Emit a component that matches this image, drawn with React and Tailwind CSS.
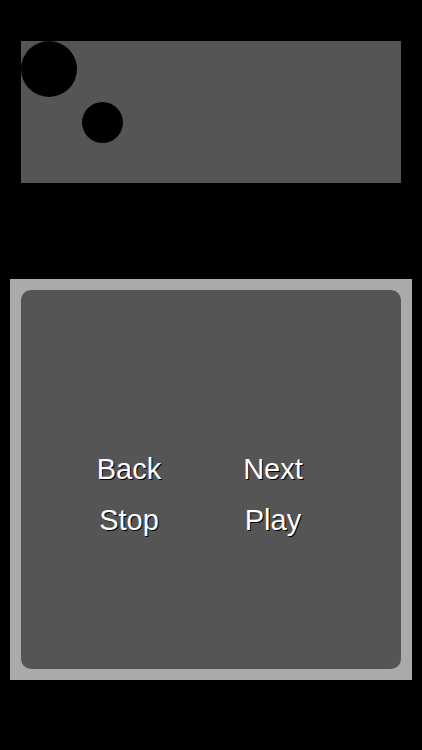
export default function App() {
  const txt = "text-center text-white text-[29px] leading-[51px] [text-shadow:1px_1px_0_#000]";
  return (
    <div className="w-[422px] h-[750px] bg-black overflow-hidden" style={{ fontFamily: '"Liberation Sans", Arial, sans-serif' }}>
      <div className="pt-[41px] px-[21px]">
        <div className="relative h-[142px] bg-[#555555] overflow-hidden">
          <div className="absolute left-0 top-0 w-[56px] h-[56px] rounded-full bg-black" />
          <div className="absolute left-[61px] top-[61px] w-[41px] h-[41px] rounded-full bg-black" />
        </div>
      </div>
      <div className="mt-[96px] mx-[10px] h-[401px] bg-[#aaaaaa] p-[11px]">
        <div className="h-full rounded-[10px] bg-[#555555] pt-[154px] pl-[36px]">
          <div className="grid grid-cols-[144px_144px]">
            <div className={txt}>Back</div>
            <div className={txt}>Next</div>
            <div className={txt}>Stop</div>
            <div className={txt}>Play</div>
          </div>
        </div>
      </div>
    </div>
  );
}
